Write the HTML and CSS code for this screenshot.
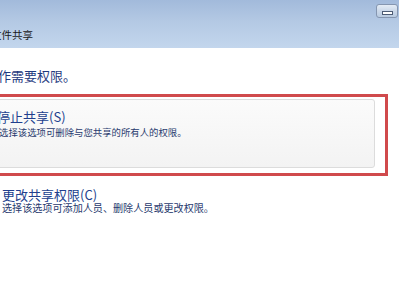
FILE: index.html
```html
<!DOCTYPE html>
<html lang="zh-CN">
<head>
<meta charset="UTF-8">
<title>文件共享</title>
<link rel="stylesheet" href="styles.css">
</head>
<body>
<div class="window">
<div class="titlebar">
<span class="title">文件共享</span>
<button class="min-btn"><span class="min-bar"></span></button>
</div>
<div class="content">
<div class="instruction">操作需要权限。</div>
<div class="highlight">
<div class="option option-first">
<div class="option-title">停止共享(S)</div>
<div class="option-desc">选择该选项可删除与您共享的所有人的权限。</div>
</div>
</div>
<div class="option option-second">
<div class="option-title">更改共享权限(C)</div>
<div class="option-desc">选择该选项可添加人员、删除人员或更改权限。</div>
</div>
</div>
</div>
</body>
</html>
```

FILE: styles.css
```css
body {
margin: 0;
background: #fff;
font-family: "Noto Sans CJK SC", "Noto Sans", sans-serif;
overflow: hidden;
}
.window {
width: 399px;
height: 300px;
background: #fff;
}
.titlebar {
height: 48px;
display: flex;
align-items: flex-start;
background: linear-gradient(to bottom, #a2badb 0%, #b4c9e4 45%, #c3d6ed 100%);
}
.title {
margin-top: 29px;
margin-left: -9px;
font-size: 10.5px;
line-height: 12px;
color: #1a1a1a;
}
.min-btn {
margin-left: auto;
margin-top: 4px;
margin-right: 1px;
width: 22px;
height: 14px;
padding: 0;
border: 1px solid #8596b0;
border-radius: 3px;
background: linear-gradient(to bottom, #e4ecf6 0%, #cbd8e9 50%, #b9cbe1 100%);
display: flex;
justify-content: center;
align-items: flex-end;
}
.min-bar {
width: 9px;
height: 2px;
margin-bottom: 2px;
background: #fff;
border: 1px solid #4d5c75;
}
.content {
padding-top: 20px;
}
.instruction {
margin-left: -15px;
font-size: 13px;
line-height: 16px;
color: #1f3a80;
}
.highlight {
margin-top: 10px;
margin-left: -10px;
width: 398px;
border: 3px solid #d04a4c;
padding: 2px 10px 5px 0;
box-sizing: border-box;
}
.option-first {
border: 1px solid #dcdcdc;
border-radius: 3px;
background: linear-gradient(to bottom, #fbfbfb 0%, #f3f3f3 100%);
height: 69px;
box-sizing: border-box;
padding: 9px 0 0 3px;
}
.option-title {
font-size: 13px;
line-height: 16px;
color: #213f8e;
}
.option-desc {
font-size: 10.1px;
line-height: 12px;
color: #283a6e;
}
.option-first .option-desc {
margin-top: 1px;
margin-left: 2px;
font-size: 9.4px;
}
.option-second {
margin-top: 12px;
padding-left: 2px;
}
.option-second .option-title {
line-height: 14px;
}
```
